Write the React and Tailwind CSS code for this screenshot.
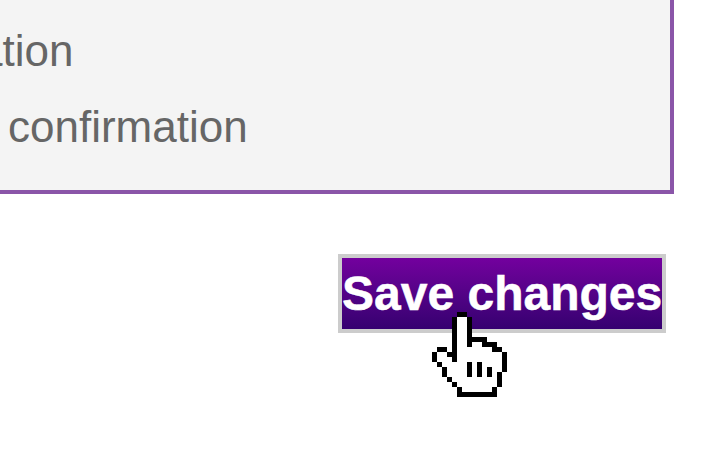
const FONT = "font-['Liberation_Sans',Arial,sans-serif]";

// Black pixels of the hand cursor on a 15 x 17 grid: [column, row, width, height]
const PIXELS = [
  [5, 0, 2, 1], [4, 1, 1, 9], [7, 1, 1, 6], [8, 5, 3, 1], [10, 6, 3, 1], [12, 7, 2, 1],
  [14, 8, 1, 4], [1, 7, 2, 1], [0, 8, 1, 2], [3, 8, 1, 1],
  [1, 10, 1, 1], [2, 11, 1, 2], [3, 13, 1, 1], [4, 14, 1, 1], [5, 15, 1, 2], [5, 16, 8, 1],
  [12, 15, 1, 1], [13, 12, 1, 3],
  [7, 10, 1, 3], [9, 10, 1, 3], [11, 11, 1, 2],
];

function HandCursor() {
  return (
    <svg width="75" height="85" viewBox="0 0 15 17" shapeRendering="crispEdges" className="absolute left-[94px] top-[58px]">
      <path
        fill="#fff"
        d="M5 1H7V6H10V7H12V8H14V12H13V15H12V16H6V15H5V14H4V13H3V11H2V10H1V8H4V1Z"
      />
      {PIXELS.map(([x, y, w, h], i) => (
        <rect key={i} x={x} y={y} width={w} height={h} fill="#000" />
      ))}
    </svg>
  );
}

export default function App() {
  return (
    <div className={`${FONT} h-[460px] w-[723px] overflow-hidden bg-white`}>
      <div className="-ml-1 -mt-1 w-[678px] border-4 border-[#8a55a8] bg-[#f4f4f4] pb-[25px] pt-[13px] text-[44px] leading-[76px] text-[#666666]">
        <p className="-ml-[22px] whitespace-nowrap">ation</p>
        <p className="ml-2 whitespace-nowrap">confirmation</p>
      </div>
      <div className="relative ml-[338px] mt-[60px] w-fit">
        <button className="block h-[79px] w-[328px] whitespace-nowrap border-4 border-[#cccccc] bg-gradient-to-b from-[#73009e] to-[#360070] p-0 text-center text-[48px] font-bold leading-[71px] text-white [-webkit-text-stroke:0.5px_white]">
          Save changes
        </button>
        <HandCursor />
      </div>
    </div>
  );
}
